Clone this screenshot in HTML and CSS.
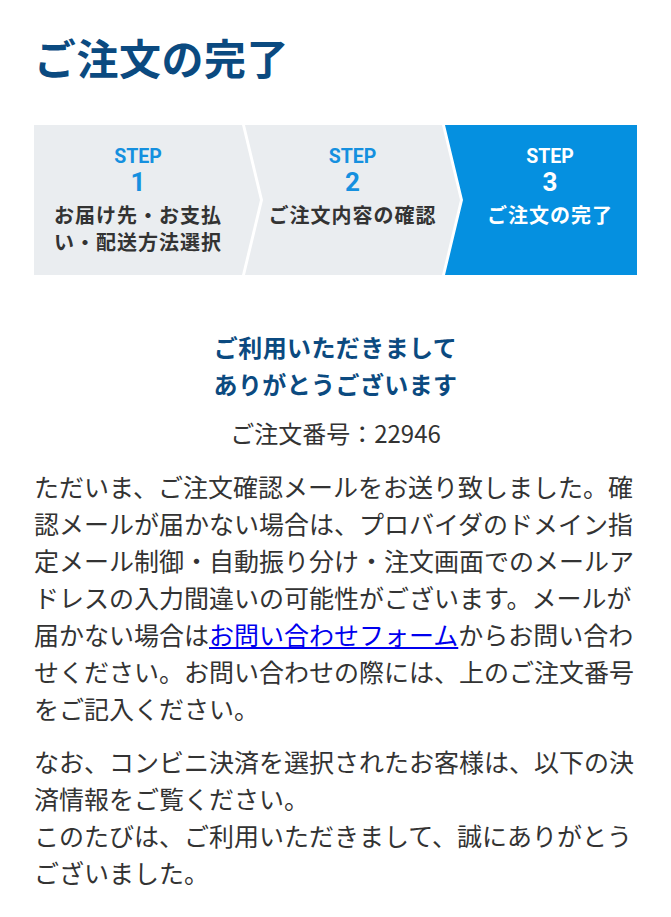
FILE: index.html
```html
<!DOCTYPE html>
<html lang="ja">
<head>
<meta charset="utf-8">
<title>ご注文の完了</title>
<link rel="stylesheet" href="styles.css">
</head>
<body>
<main class="page">
  <h1 class="title">ご注文の完了</h1>
  <ol class="steps">
    <li class="step step-first">
      <span class="step-label">STEP</span>
      <span class="step-num">1</span>
      <span class="step-name">お届け先・お支払い・配送方法選択</span>
    </li>
    <li class="step step-mid">
      <span class="step-label">STEP</span>
      <span class="step-num">2</span>
      <span class="step-name">ご注文内容の確認</span>
    </li>
    <li class="step step-last is-current">
      <span class="step-label">STEP</span>
      <span class="step-num">3</span>
      <span class="step-name">ご注文の完了</span>
    </li>
  </ol>
  <h2 class="thanks">ご利用いただきまして<br>ありがとうございます</h2>
  <p class="order-no">ご注文番号：22946</p>
  <p class="body-text">ただいま、ご注文確認メールをお送り致しました。確認メールが届かない場合は、プロバイダのドメイン指定メール制御・自動振り分け・注文画面でのメールアドレスの入力間違いの可能性がございます。メールが届かない場合は<a href="#" class="link">お問い合わせフォーム</a>からお問い合わせください。お問い合わせの際には、上のご注文番号をご記入ください。</p>
  <p class="body-text body-text-2">なお、コンビニ決済を選択されたお客様は、以下の決済情報をご覧ください。<br>このたびは、ご利用いただきまして、誠にありがとうございました。</p>
</main>
</body>
</html>
```

FILE: styles.css
```css
* { box-sizing: border-box; }
html, body { margin: 0; padding: 0; background: #fff; }
body {
  font-family: "Noto Sans CJK JP", "Noto Sans", sans-serif;
  color: #333;
}
.page {
  padding: 28px 34px 0 34px;
}
.title {
  margin: 0;
  font-size: 42px;
  line-height: 58px;
  font-weight: 700;
  color: #0b4a80;
  letter-spacing: 0.5px;
}
.steps {
  list-style: none;
  margin: 39px 0 0 0;
  padding: 0;
  display: flex;
  height: 150px;
}
.step {
  display: flex;
  flex-direction: column;
  align-items: center;
  text-align: center;
  background: #eaedf0;
  padding-top: 19px;
  height: 150px;
}
.step-first {
  width: 226px;
  padding-left: 12px;
  padding-right: 30px;
  clip-path: polygon(0 0, calc(100% - 18px) 0, 100% 50%, calc(100% - 18px) 100%, 0 100%);
}
.step-mid {
  width: 215px;
  margin-left: -15px;
  padding-left: 18px;
  padding-right: 18px;
  clip-path: polygon(0 0, calc(100% - 18px) 0, 100% 50%, calc(100% - 18px) 100%, 0 100%, 18px 50%);
}
.step-last {
  width: 192px;
  margin-left: -15px;
  padding-left: 18px;
  clip-path: polygon(0 0, 100% 0, 100% 100%, 0 100%, 18px 50%);
}
.step-label {
  display: block;
  font-family: Roboto, "Noto Sans CJK JP", sans-serif;
  font-size: 19.5px;
  line-height: 25px;
  font-weight: 700;
  color: #1590df;
}
.step-num {
  display: block;
  font-family: Roboto, "Noto Sans CJK JP", sans-serif;
  font-size: 26px;
  line-height: 27px;
  font-weight: 700;
  color: #1590df;
}
.step-name {
  display: block;
  margin-top: 5px;
  font-size: 20px;
  line-height: 27px;
  font-weight: 700;
  letter-spacing: 1px;
  color: #333;
}
.is-current { background: #0590e0; }
.is-current .step-label,
.is-current .step-num,
.is-current .step-name { color: #fff; }
.thanks {
  margin: 53px 0 0 0;
  text-align: center;
  font-size: 24px;
  line-height: 37px;
  font-weight: 700;
  color: #0b4a80;
  letter-spacing: 0.4px;
}
.order-no {
  margin: 12px 0 0 0;
  text-align: center;
  font-size: 24px;
  line-height: 37px;
  color: #333;
}
.body-text {
  margin: 17px 0 0 0;
  font-size: 25px;
  line-height: 37px;
  color: #333;
}
.body-text-2 { margin-top: 16px; }
.link { color: #0000ee; text-decoration: underline; }
```
